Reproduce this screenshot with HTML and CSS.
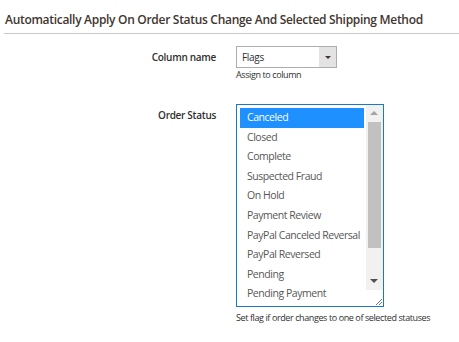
FILE: index.html
```html
<!DOCTYPE html>
<html lang="en">
  <head>
    <meta charset="UTF-8" />
    <meta name="viewport" content="width=device-width, initial-scale=1.0" />
    <title>Order Status Flags</title>
    <link rel="stylesheet" href="styles.css">
  </head>
  <body>
    <div class="section">
      <div class="section-title">Automatically Apply On Order Status Change And Selected Shipping Method</div>

      <div class="field">
        <label class="field-label">Column name</label>
        <div class="field-control">
          <div class="dropdown">
            <span class="dropdown-value">Flags</span>
            <span class="dropdown-arrow"></span>
          </div>
          <div class="note">Assign to column</div>
        </div>
      </div>

      <div class="field field-status">
        <label class="field-label">Order Status</label>
        <div class="field-control">
          <div class="multiselect">
            <ul class="options">
              <li class="option selected">Canceled</li>
              <li class="option">Closed</li>
              <li class="option">Complete</li>
              <li class="option">Suspected Fraud</li>
              <li class="option">On Hold</li>
              <li class="option">Payment Review</li>
              <li class="option">PayPal Canceled Reversal</li>
              <li class="option">PayPal Reversed</li>
              <li class="option">Pending</li>
              <li class="option">Pending Payment</li>
            </ul>
            <div class="scrollbar">
              <div class="scroll-up"></div>
              <div class="scroll-track">
                <div class="scroll-thumb"></div>
              </div>
              <div class="scroll-down"></div>
              <div class="resizer">
                <svg width="10" height="10" viewBox="0 0 10 10">
                  <path d="M9 3 L3 9 M9 6 L6 9" stroke="#777" stroke-width="1" fill="none" />
                </svg>
              </div>
            </div>
          </div>
          <div class="note note-status">Set flag if order changes to one of selected statuses</div>
        </div>
      </div>
    </div>
  </body>
</html>
```

FILE: styles.css
```css
body {
  font-family: "Open Sans", Arial, sans-serif;
  background-color: #fff;
  color: #303030;
  margin: 0;
  padding: 0;
}
.section {
  padding: 0 0 0 4px;
}
.section-title {
  height: 16px;
  line-height: 16px;
  padding: 12px 0 5px 1px;
  font-size: 12px;
  letter-spacing: -0.3px;
  font-weight: 600;
  color: #41362f;
  white-space: nowrap;
  border-bottom: 1px solid #cbc8c5;
}
.field {
  display: flex;
  gap: 20px;
  margin-top: 12px;
}
.field-status {
  margin-top: 23px;
}
.field-label {
  width: 212px;
  text-align: right;
  font-size: 10px;
  letter-spacing: -0.3px;
  line-height: 14px;
  font-weight: 600;
  color: #303030;
  padding-top: 4px;
}
.field-control {
  display: flex;
  flex-direction: column;
  white-space: nowrap;
}
.dropdown {
  display: flex;
  width: 99px;
  height: 20px;
  border: 1px solid #adadad;
  background-color: #fff;
}
.dropdown-value {
  flex: 1;
  font-size: 10px;
  letter-spacing: -0.3px;
  line-height: 20px;
  color: #303030;
  padding-left: 5px;
}
.dropdown-arrow {
  width: 17px;
  background-color: #e3e3e3;
  position: relative;
}
.dropdown-arrow::after {
  content: "";
  position: absolute;
  left: 6px;
  top: 9px;
  border-left: 3px solid transparent;
  border-right: 3px solid transparent;
  border-top: 3px solid #41362f;
}
.note {
  font-size: 9px;
  letter-spacing: -0.4px;
  line-height: 12px;
  color: #303030;
  margin-top: 1px;
}
.note-status {
  margin-top: 5px;
}
.multiselect {
  display: flex;
  width: 146px;
  height: 201px;
  border: 1px solid #1979c3;
  background-color: #fff;
}
.options {
  flex: 1;
  list-style: none;
  margin: 0;
  padding: 3px 2px 0 3px;
  overflow: hidden;
}
.option {
  height: 19.6px;
  line-height: 19px;
  padding-left: 7px;
  font-size: 10.5px;
  letter-spacing: -0.45px;
  color: #575757;
  white-space: nowrap;
}
.option.selected {
  background-color: #1e90ff;
  color: #fff;
}
.scrollbar {
  width: 17px;
  display: flex;
  flex-direction: column;
  background-color: #f1f1f1;
}
.scroll-up,
.scroll-down {
  height: 17px;
  position: relative;
}
.scroll-up::after {
  content: "";
  position: absolute;
  left: 4px;
  top: 6px;
  border-left: 4px solid transparent;
  border-right: 4px solid transparent;
  border-bottom: 4px solid #a3a3a3;
}
.scroll-down::after {
  content: "";
  position: absolute;
  left: 4px;
  top: 6px;
  border-left: 4px solid transparent;
  border-right: 4px solid transparent;
  border-top: 4px solid #505050;
}
.scroll-track {
  flex: 1;
  padding: 0 2px;
}
.scroll-thumb {
  height: 126px;
  background-color: #c1c1c1;
}
.resizer {
  height: 16px;
  background-color: #fff;
  display: flex;
  align-items: flex-end;
  justify-content: flex-end;
}
.resizer svg {
  display: block;
}
```
